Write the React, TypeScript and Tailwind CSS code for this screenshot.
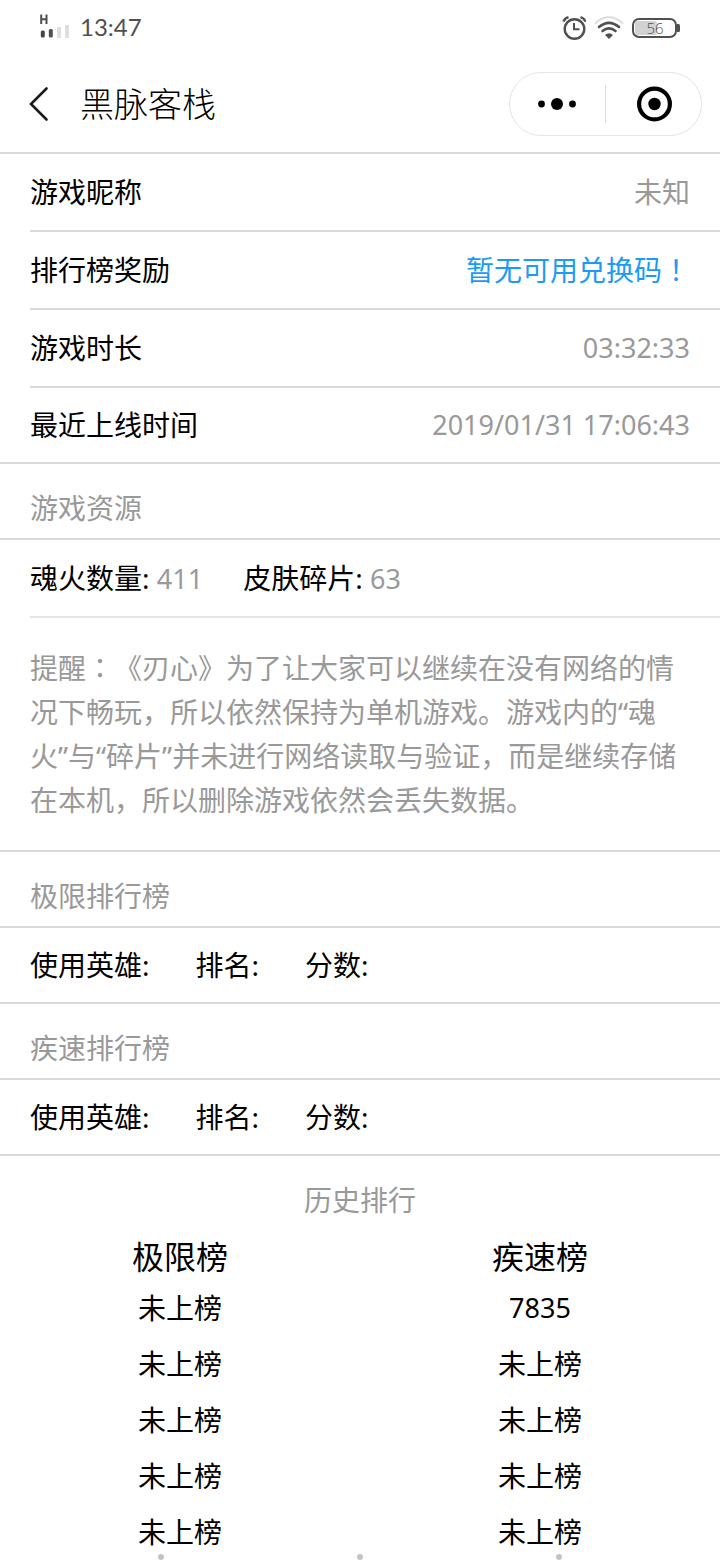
import React from 'react';

const INFO_ROWS = [
  { label: '游戏昵称', value: '未知' },
  { label: '排行榜奖励', value: '暂无可用兑换码！', link: true },
  { label: '游戏时长', value: '03:32:33', numeric: true },
  { label: '最近上线时间', value: '2019/01/31 17:06:43', numeric: true },
];

const HISTORY = [
  ['未上榜', '7835'],
  ['未上榜', '未上榜'],
  ['未上榜', '未上榜'],
  ['未上榜', '未上榜'],
  ['未上榜', '未上榜'],
];

// centres full-width marks such as ： and ！ in their box
function Wide({ children }: { children: React.ReactNode }) {
  return <span lang="zh-TW" className="leading-none font-['Noto_Sans_CJK_TC',sans-serif]">{children}</span>;
}

function StatusBar() {
  return (
    <div className="h-14 flex items-center justify-between px-10 text-[#505050]">
      <div className="flex items-center gap-[11px]">
        <svg width="29" height="26" viewBox="0 0 29 26" className="-mt-1">
          <path d="M1.2 1.500v9.500M6.500 1.500v9.500M1.2 6.200h5" stroke="#505050" strokeWidth="2" fill="none" />
          <rect x="0.800" y="17.500" width="4" height="7" rx="1.500" fill="#444" />
          <rect x="8.800" y="16" width="4" height="8.500" rx="1.500" fill="#505050" />
          <rect x="17" y="14" width="4" height="11" rx="0.500" fill="#dedede" />
          <rect x="25" y="12" width="4" height="13" rx="0.500" fill="#dedede" />
        </svg>
        <span className="pb-0.5 text-[24px] leading-8 font-['Lato',sans-serif]">13:47</span>
      </div>
      <div className="flex items-center gap-2">
        <svg width="24" height="24" viewBox="0 0 24 24" fill="none" stroke="#505050">
          <circle cx="12.500" cy="13" r="9.800" strokeWidth="2.400" />
          <path d="M12 7v6.200h5.500" strokeWidth="2" />
          <path d="M1.500 5.600Q2.800 2.200 6.500 1.200M23.500 5.600Q22.200 2.200 18.500 1.200" strokeWidth="2.400" />
        </svg>
        <svg width="30" height="24" viewBox="0 0 30 24" fill="none" strokeLinecap="round">
          <path d="M1.500 7Q15-4.400 28.500 7" stroke="#dcdcdc" strokeWidth="2" />
          <path d="M5 11Q15 2.600 25 11" stroke="#505050" strokeWidth="2.600" />
          <path d="M8.500 15Q15 9.600 21.500 15" stroke="#505050" strokeWidth="2.600" />
          <path d="M11 19Q15 15.400 19 19L15 23Z" fill="#505050" />
        </svg>
        <svg width="48" height="20" viewBox="0 0 48 20" fill="none">
          <rect x="3" y="3" width="22" height="14" rx="3" fill="#d2d2d2" />
          <rect x="1" y="1" width="43" height="18" rx="6" stroke="#505050" strokeWidth="2" />
          <path d="M45 6h1.500q1.500 0 1.500 1.500v5q0 1.500-1.500 1.500H45z" fill="#505050" />
          <text x="23" y="15.500" textAnchor="middle" fontSize="15" fontWeight="300"
            fontFamily="Open Sans, sans-serif" fill="#505050">56</text>
        </svg>
      </div>
    </div>
  );
}

function NavBar() {
  return (
    <header className="h-[98px] flex items-center border-b-2 border-[#d9d9d9] pl-7 pr-[18px]">
      <button aria-label="返回" className="w-[52px]">
        <svg width="24" height="36" viewBox="0 0 24 36" fill="none" stroke="#1a1a1a" strokeWidth="2.600" strokeLinecap="round">
          <path d="M18.500 2.500L3 18L18.500 33.500" />
        </svg>
      </button>
      <h1 className="flex-1 text-[34px] leading-10 font-light">黑脉客栈</h1>
      <div className="w-[193px] h-16 flex items-center rounded-full border border-[#e5e5e5]">
        <button aria-label="更多" className="flex-1 h-full flex items-center justify-center">
          <svg width="40" height="12" viewBox="0 0 40 12">
            <circle cx="3.500" cy="6" r="3.400" />
            <circle cx="19" cy="6" r="6" />
            <circle cx="34.500" cy="6" r="3.400" />
          </svg>
        </button>
        <span className="w-px h-[38px] bg-[#dcdcdc]" />
        <button aria-label="关闭" className="flex-1 h-full flex items-center justify-center">
          <svg width="36" height="36" viewBox="0 0 36 36">
            <circle cx="18.500" cy="18" r="15.400" fill="none" stroke="#000" strokeWidth="4.200" />
            <circle cx="18.500" cy="18" r="6.200" />
          </svg>
        </button>
      </div>
    </header>
  );
}

function SectionTitle({ children }: { children: React.ReactNode }) {
  return (
    <h2 className="h-[76px] pt-6 pl-[30px] leading-10 text-[#999] border-b-2 border-[#d9d9d9]">{children}</h2>
  );
}

function RankRow() {
  return (
    <div className="h-[76px] flex items-center gap-[46px] pl-[30px] border-b-2 border-[#d9d9d9]">
      <span>使用英雄:</span>
      <span>排名:</span>
      <span>分数:</span>
    </div>
  );
}

export default function App() {
  return (
    <div
      lang="zh-CN"
      className="bg-white text-black text-[28px] leading-[44px] [text-spacing-trim:space-all]
                 font-['Noto_Sans','Noto_Sans_CJK_SC',sans-serif]"
    >
      <StatusBar />
      <NavBar />

      <main>
        <dl className="pl-[30px] border-b-2 border-[#d9d9d9]">
          {INFO_ROWS.map((row, i) => (
            <div
              key={row.label}
              className={`flex items-center justify-between pr-[30px] ${
                i < INFO_ROWS.length - 1 ? 'h-[78px] border-b-2 border-[#d9d9d9]' : 'h-[74px]'
              }`}
            >
              <dt>{row.label}</dt>
              {row.link ? (
                <dd><a href="#code" className="text-[#1b9af7]">{row.value.slice(0, -1)}<Wide>！</Wide></a></dd>
              ) : (
                <dd className={row.numeric ? 'text-[27px] text-[#999]' : 'text-[#999]'}>{row.value}</dd>
              )}
            </div>
          ))}
        </dl>

        <SectionTitle>游戏资源</SectionTitle>
        <div className="ml-[30px] h-[78px] flex items-center gap-10 border-b-2 border-[#e5e5e5]">
          <span>魂火数量: <span className="text-[27px] text-[#999]">411</span></span>
          <span>皮肤碎片: <span className="text-[27px] text-[#999]">63</span></span>
        </div>
        <p className="px-[30px] py-7 text-[#999] border-b-2 border-[#d9d9d9]">
          提醒<Wide>：</Wide>《刃心》为了让大家可以继续在没有网络的情况下畅玩，所以依然保持为单机游戏。游戏内的“魂火”与“碎片”并未进行网络读取与验证，而是继续存储在本机，所以删除游戏依然会丢失数据。
        </p>

        <SectionTitle>极限排行榜</SectionTitle>
        <RankRow />
        <SectionTitle>疾速排行榜</SectionTitle>
        <RankRow />

        <table className="w-full table-fixed text-center">
          <caption className="pt-[22px] pb-3 text-[#999]">历史排行</caption>
          <thead>
            <tr className="h-[46px] text-[32px]">
              <th className="p-0 font-normal">极限榜</th>
              <th className="p-0 font-normal">疾速榜</th>
            </tr>
          </thead>
          <tbody>
            {HISTORY.map(([limit, speed], i) => (
              <tr key={i} className="h-14">
                <td className="p-0">{limit}</td>
                <td className={/^\d+$/.test(speed) ? 'p-0 text-[27px]' : 'p-0'}>{speed}</td>
              </tr>
            ))}
          </tbody>
        </table>
      </main>

      {/* Gesture hints */}
      <div className="fixed inset-x-[62px] bottom-0 flex justify-around">
        <span className="size-1.5 rounded-full bg-[#c4c4c4]" />
        <span className="size-1.5 rounded-full bg-[#c4c4c4]" />
        <span className="size-1.5 rounded-full bg-[#c4c4c4]" />
      </div>
    </div>
  );
}
